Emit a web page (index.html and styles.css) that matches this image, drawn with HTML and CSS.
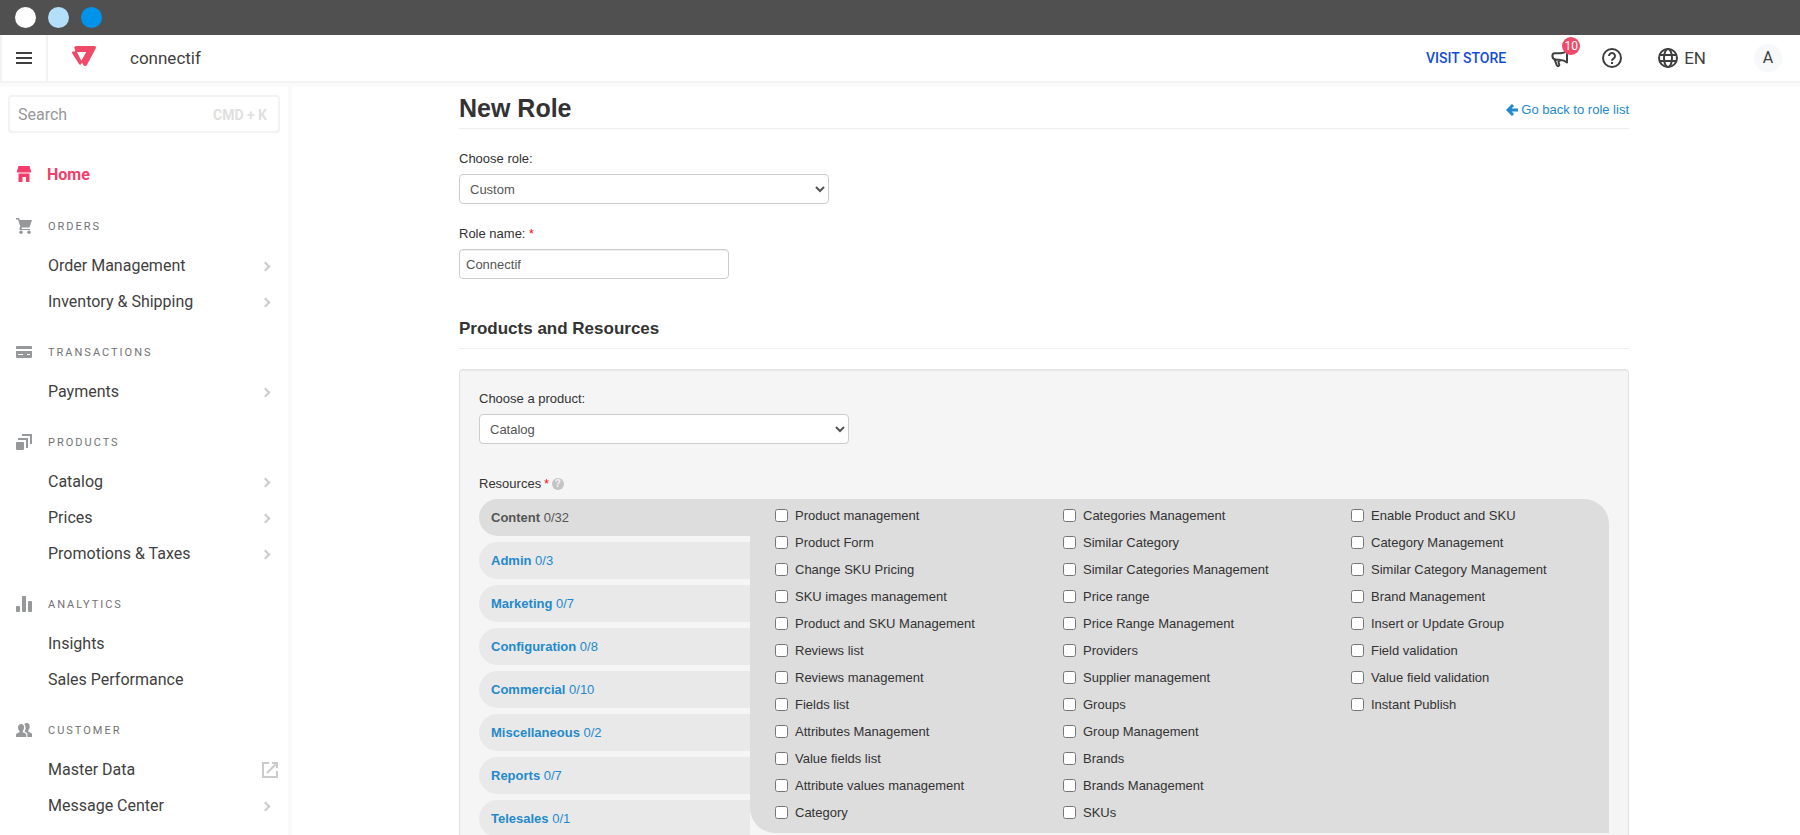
FILE: index.html
```html
<!DOCTYPE html>
<html lang="en">
<head>
    <meta charset="UTF-8">
    <meta name="viewport" content="width=device-width, initial-scale=1.0">
    <title>New Role</title>
    <link rel="stylesheet" href="styles.css">
</head>
<body>
    <div class="window-bar">
        <span class="dot"></span>
        <span class="dot dot-light"></span>
        <span class="dot dot-blue"></span>
    </div>

    <header class="topbar">
        <button class="menu-btn" aria-label="Menu">
            <svg width="16" height="14" viewBox="0 0 16 14"><path d="M0 2h16M0 7h16M0 12h16" stroke="#3f3f40" stroke-width="2"/></svg>
        </button>
        <svg class="logo" width="24" height="20" viewBox="0 0 24 20">
            <path fill="#f04a68" fill-rule="evenodd" d="M4.200 0H22.300c1.400 0 2.100 1.200 1.400 2.400L14.900 18.900c-.8 1.500-2.700 1.500-3.500 0L10 16.500l-.7 1.500c-.6 1.100-1.700 1.100-2.300 0L.3 7.500C-.4 6.300.2 5.500 1.300 5.500h2L2.600 2.800C1.900 1.300 2.600 0 4.200 0zM4.900 6l4.500 8.800L14.200 6z"/>
        </svg>
        <span class="account">connectif</span>
        <div class="topbar-right">
            <a class="visit-store" href="#">VISIT STORE</a>
            <button class="icon-btn news-btn" aria-label="News">
                <svg width="20" height="20" viewBox="0 0 20 20" fill="none" stroke="#3f3f40" stroke-width="2" stroke-linejoin="round"><path d="M17 3v11.500c-2-1.600-4-2.400-6.500-2.400l-5-.6C1.500 11 1.600 5.200 4.500 5.200h6C13 5.200 15 4.600 17 3zM4.500 11.400l2.400 6c.6 1.300 2.700.8 2.400-.6l-.9-3 2-1.500"/></svg>
                <span class="badge">10</span>
            </button>
            <button class="icon-btn help-btn" aria-label="Help">
                <svg width="20" height="20" viewBox="0 0 20 20" fill="none" stroke="#3f3f40" stroke-width="2"><circle cx="10" cy="10" r="9"/><path d="M7 8a3 3 0 1 1 4.500 2.600c-1 .6-1.500 1.100-1.500 2.200"/><path d="M10 14v2"/></svg>
            </button>
            <button class="icon-btn lang-btn">
                <svg width="20" height="20" viewBox="0 0 20 20" fill="none" stroke="#3f3f40" stroke-width="2"><circle cx="10" cy="10" r="9"/><ellipse cx="10" cy="10" rx="4" ry="9"/><path d="M1.500 7h17M1.500 13h17"/></svg>
                EN
            </button>
            <button class="avatar">A</button>
        </div>
    </header>

    <div class="layout">
        <nav class="sidebar">
            <label class="search">
                <input type="text" placeholder="Search" aria-label="Search">
                <span class="shortcut">CMD + K</span>
            </label>

            <a class="home" href="#">
                <svg width="16" height="16" viewBox="0 0 16 16" fill="#f23e6b"><path d="M2.500 0h11L15 5H1zM1 5h14v1.500H1zM2.500 7.500h11V16H10v-5H6.500v5h-4z"/></svg>
                Home
            </a>

            <section class="nav-group">
                <h4>
                    <svg width="16" height="16" viewBox="0 0 16 16" fill="#979899"><path d="M0 0h3l.8 2H16l-2.500 7.500H6L5.500 11H14v1H4.500c-1 0-1.500-1-1-1.800L4.300 8.500 2 1.600H0z"/><circle cx="5" cy="14.200" r="1.800"/><circle cx="13" cy="14.200" r="1.800"/></svg>
                    ORDERS
                </h4>
                <a href="#">Order Management <i class="chevron"></i></a>
                <a href="#">Inventory &amp; Shipping <i class="chevron"></i></a>
            </section>

            <section class="nav-group">
                <h4>
                    <svg width="16" height="16" viewBox="0 0 16 16" fill="#979899"><path fill-rule="evenodd" d="M1 2h14a1 1 0 0 1 1 1v2H0V3a1 1 0 0 1 1-1zM0 7h16v6a1 1 0 0 1-1 1H1a1 1 0 0 1-1-1zM2 10v1h5v-1zM11 10v1h3v-1z"/></svg>
                    TRANSACTIONS
                </h4>
                <a href="#">Payments <i class="chevron"></i></a>
            </section>

            <section class="nav-group">
                <h4>
                    <svg width="16" height="16" viewBox="0 0 16 16" fill="#979899"><rect y="8" width="8" height="8" rx="1"/><path d="M2 4h10v10h-2V6H2zM6 0h10v10h-2V2H6z"/></svg>
                    PRODUCTS
                </h4>
                <a href="#">Catalog <i class="chevron"></i></a>
                <a href="#">Prices <i class="chevron"></i></a>
                <a href="#">Promotions &amp; Taxes <i class="chevron"></i></a>
            </section>

            <section class="nav-group">
                <h4>
                    <svg width="16" height="16" viewBox="0 0 16 16" fill="#979899"><rect y="10" width="4" height="6" rx="1"/><rect x="6" width="4" height="16" rx="1"/><rect x="12" y="5" width="4" height="11" rx="1"/></svg>
                    ANALYTICS
                </h4>
                <a href="#">Insights</a>
                <a href="#">Sales Performance</a>
            </section>

            <section class="nav-group">
                <h4>
                    <svg width="16" height="16" viewBox="0 0 16 16" fill="#979899"><path d="M5.200 2C7.200 2 8 3.500 8 5.500c0 1.500-.5 2.700-1.200 3.400v1.300l2.700 1.200c.6.300.8.700.8 1.300V15H0v-2.300c0-.6.300-1 .8-1.300l2.700-1.200V8.900C2.600 8.200 2 7 2 5.500 2 3.500 3.200 2 5.200 2z"/><path d="M8.300 2C8.800 1.300 9.600 1 10.600 1 12.700 1 13.700 2.500 13.700 4.500c0 1.700-.6 3-1.400 3.700v1.500l2.900 1.200c.5.300.8.700.8 1.300V15h-4.600v-2.600c0-1-.4-1.600-1.200-2L8.400 9.600C9.300 8.500 9.600 7 9.600 5.500 9.500 4 9 3 8.300 2z"/></svg>
                    CUSTOMER
                </h4>
                <a href="#">Master Data
                    <svg class="external" width="16" height="16" viewBox="0 0 16 16" fill="none" stroke="#cacbcc" stroke-width="2"><path d="M7 1H1v14h14V9M5 11L14.500 1.500M10 1h5v5"/></svg>
                </a>
                <a href="#">Message Center <i class="chevron"></i></a>
            </section>
        </nav>

        <main class="content">
            <form class="container">
                <div class="page-header">
                    <h1>New Role</h1>
                    <a class="back-link" href="#">
                        <svg width="12" height="12" viewBox="0 0 12 12" fill="none" stroke="#2389cc" stroke-width="3"><path d="M7 1L2 6l5 5M2 6h10"/></svg>
                        Go back to role list
                    </a>
                </div>

                <div class="field">
                    <label for="role">Choose role:</label>
                    <select id="role"><option>Custom</option></select>
                </div>
                <div class="field">
                    <label for="role-name">Role name: <span class="required">*</span></label>
                    <input type="text" id="role-name" value="Connectif">
                </div>

                <h2>Products and Resources</h2>

                <div class="well">
                    <div class="field">
                        <label for="product">Choose a product:</label>
                        <select id="product"><option>Catalog</option></select>
                    </div>
                    <div class="resources-title">
                        Resources <span class="required">*</span>
                        <span class="help">?</span>
                    </div>
                    <div class="resources">
                        <div class="tabs">
                            <a class="active" href="#"><b>Content</b> 0/32</a>
                            <a href="#"><b>Admin</b> 0/3</a>
                            <a href="#"><b>Marketing</b> 0/7</a>
                            <a href="#"><b>Configuration</b> 0/8</a>
                            <a href="#"><b>Commercial</b> 0/10</a>
                            <a href="#"><b>Miscellaneous</b> 0/2</a>
                            <a href="#"><b>Reports</b> 0/7</a>
                            <a href="#"><b>Telesales</b> 0/1</a>
                        </div>
                        <div class="tab-content">
                            <label><input type="checkbox">Product management</label>
                            <label><input type="checkbox">Product Form</label>
                            <label><input type="checkbox">Change SKU Pricing</label>
                            <label><input type="checkbox">SKU images management</label>
                            <label><input type="checkbox">Product and SKU Management</label>
                            <label><input type="checkbox">Reviews list</label>
                            <label><input type="checkbox">Reviews management</label>
                            <label><input type="checkbox">Fields list</label>
                            <label><input type="checkbox">Attributes Management</label>
                            <label><input type="checkbox">Value fields list</label>
                            <label><input type="checkbox">Attribute values management</label>
                            <label><input type="checkbox">Category</label>
                            <label><input type="checkbox">Categories Management</label>
                            <label><input type="checkbox">Similar Category</label>
                            <label><input type="checkbox">Similar Categories Management</label>
                            <label><input type="checkbox">Price range</label>
                            <label><input type="checkbox">Price Range Management</label>
                            <label><input type="checkbox">Providers</label>
                            <label><input type="checkbox">Supplier management</label>
                            <label><input type="checkbox">Groups</label>
                            <label><input type="checkbox">Group Management</label>
                            <label><input type="checkbox">Brands</label>
                            <label><input type="checkbox">Brands Management</label>
                            <label><input type="checkbox">SKUs</label>
                            <label><input type="checkbox">Enable Product and SKU</label>
                            <label><input type="checkbox">Category Management</label>
                            <label><input type="checkbox">Similar Category Management</label>
                            <label><input type="checkbox">Brand Management</label>
                            <label><input type="checkbox">Insert or Update Group</label>
                            <label><input type="checkbox">Field validation</label>
                            <label><input type="checkbox">Value field validation</label>
                            <label><input type="checkbox">Instant Publish</label>
                        </div>
                    </div>
                </div>
            </form>
        </main>
    </div>
</body>
</html>
```
FILE: styles.css
```css
* {
    box-sizing: border-box;
}

body {
    margin: 0;
    height: 100vh;
    display: flex;
    flex-direction: column;
    overflow: hidden;
    font-family: "Liberation Sans", Arial, sans-serif;
    font-size: 13px;
    line-height: 20px;
    color: #333;
    background-color: #fff;
}

a {
    text-decoration: none;
}

button {
    border: none;
    background: none;
    padding: 0;
    font: inherit;
    color: inherit;
    cursor: pointer;
}

/* Window bar */
.window-bar {
    flex: none;
    display: flex;
    align-items: center;
    gap: 12px;
    height: 35px;
    padding-left: 15px;
    background-color: #505050;
}

.dot {
    width: 21px;
    height: 21px;
    border-radius: 50%;
    background-color: #fff;
}

.dot-light {
    background-color: #b3dffa;
}

.dot-blue {
    background-color: #0093ec;
}

/* Top bar */
.topbar {
    flex: none;
    display: flex;
    align-items: center;
    height: 48px;
    border-bottom: 2px solid #f3f3f4;
    box-shadow: 0 4px 0 #fafafa;
    position: relative;
    z-index: 1;
    font-family: Roboto, sans-serif;
    font-size: 17px;
    color: #3f3f40;
}

.menu-btn {
    display: flex;
    align-items: center;
    justify-content: center;
    width: 48px;
    height: 100%;
    border-left: 2px solid #f3f3f4;
    border-right: 2px solid #f3f3f4;
}

.logo {
    margin: 0 34px 4px 24px;
}

.topbar-right {
    display: flex;
    align-items: center;
    margin-left: auto;
    padding-right: 18px;
}

.visit-store {
    font-size: 14px;
    font-weight: 500;
    color: #134cd8;
    margin-right: 44px;
}

.icon-btn {
    display: flex;
    align-items: center;
    gap: 6px;
}

.news-btn {
    position: relative;
    margin-right: 32px;
}

.badge {
    position: absolute;
    top: -11px;
    left: 12px;
    width: 18px;
    height: 18px;
    border-radius: 50%;
    background-color: #f04a68;
    color: #fff;
    font-size: 12px;
    line-height: 18px;
    text-align: center;
}

.help-btn {
    margin-right: 36px;
}

.lang-btn {
    margin-right: 48px;
}

.avatar {
    width: 28px;
    height: 28px;
    border-radius: 50%;
    background-color: #f7f8fa;
    font-size: 16px;
}

/* Sidebar */
.layout {
    flex: 1;
    min-height: 0;
    display: flex;
}

.sidebar {
    flex: none;
    width: 288px;
    padding: 12px 8px;
    overflow-y: auto;
    scrollbar-width: none;
    box-shadow: 4px 0 0 #fafafa;
    font-family: Roboto, sans-serif;
    font-size: 16px;
    color: #3f3f40;
}

.search {
    display: flex;
    align-items: center;
    height: 38px;
    padding: 1px 11px 0 8px;
    border: 2px solid #f3f3f4;
    border-radius: 4px;
}

.search input {
    flex: 1;
    min-width: 0;
    padding: 0;
    border: none;
    outline: none;
    font: inherit;
}

.search input::placeholder {
    color: #979899;
}

.shortcut {
    font-size: 14px;
    font-weight: 700;
    color: #e0e0e1;
}

.home {
    display: flex;
    align-items: center;
    gap: 15px;
    height: 40px;
    margin-top: 22px;
    padding-left: 8px;
    font-weight: 700;
    color: #f23e6b;
}

.home svg,
.nav-group h4 svg {
    margin-bottom: 3px;
}

.nav-group h4 {
    display: flex;
    align-items: center;
    gap: 16px;
    height: 36px;
    margin: 15px 0 3px;
    padding-left: 8px;
    font-size: 11px;
    font-weight: 400;
    letter-spacing: 2px;
    color: #727273;
}

.home + .nav-group h4 {
    margin-top: 14px;
}

.nav-group a {
    display: flex;
    align-items: center;
    justify-content: space-between;
    height: 36px;
    padding: 0 2px 0 40px;
    color: inherit;
}

.chevron {
    width: 7px;
    height: 7px;
    margin-right: 9px;
    border-top: 2px solid #cacbcc;
    border-right: 2px solid #cacbcc;
    transform: rotate(45deg);
}

/* Content */
.content {
    flex: 1;
    min-width: 0;
    overflow-y: auto;
    scrollbar-width: none;
    padding: 5px 20px 20px;
}

.container {
    max-width: 1170px;
    margin: 0 auto;
}

.page-header {
    display: flex;
    align-items: center;
    justify-content: space-between;
    margin-bottom: 20px;
    border-bottom: 1px solid #eee;
}

h1 {
    margin: 0;
    font-size: 25px;
    line-height: 40px;
}

h2 {
    margin: 31px 0 20px;
    border-bottom: 1px solid #eee;
    font-size: 17px;
    line-height: 38px;
}

.back-link {
    display: flex;
    align-items: center;
    gap: 3px;
    padding-top: 4px;
    color: #2389cc;
}

.field {
    margin-bottom: 20px;
}

.field label {
    display: block;
    margin-bottom: 5px;
}

.field select,
.field input {
    display: block;
    height: 30px;
    padding: 4px 6px;
    border: 1px solid #ccc;
    border-radius: 4px;
    background-color: #fff;
    font: inherit;
    color: #555;
}

.field select {
    width: 370px;
}

.field input {
    width: 270px;
    box-shadow: inset 0 1px 1px rgba(0, 0, 0, 0.07);
}

.required {
    font-size: 12px;
    color: #f00;
}

.well {
    padding: 19px;
    border: 1px solid #e3e3e3;
    border-radius: 4px;
    background-color: #f5f5f5;
    box-shadow: inset 0 1px 1px rgba(0, 0, 0, 0.05);
}

.resources-title {
    display: flex;
    align-items: center;
    gap: 3px;
    margin: 30px 0 5px;
}

.help {
    width: 12px;
    height: 12px;
    border-radius: 50%;
    background-color: #c4c4c4;
    color: #f5f5f5;
    font-size: 10px;
    font-weight: 700;
    line-height: 12px;
    text-align: center;
}

.resources {
    display: flex;
    align-items: flex-start;
}

.tabs {
    flex: none;
    display: flex;
    flex-direction: column;
    gap: 6px;
    width: 271px;
}

.tabs a {
    height: 37px;
    padding-left: 12px;
    border-radius: 19px 0 0 19px;
    background-color: #e9e9e9;
    line-height: 37px;
    color: #2389cc;
}

.tabs .active {
    background-color: #ddd;
    color: #555;
}

.tab-content {
    flex: 1;
    display: grid;
    grid-template-rows: repeat(12, 27px);
    grid-auto-flow: column;
    grid-auto-columns: 288px;
    padding: 3px 0 7px 25px;
    border-radius: 0 25px 0 25px;
    background-color: #ddd;
    overflow: hidden;
}

.tab-content label {
    display: flex;
    align-items: center;
}

.tab-content input {
    margin: 0 7px 0 0;
}
```
